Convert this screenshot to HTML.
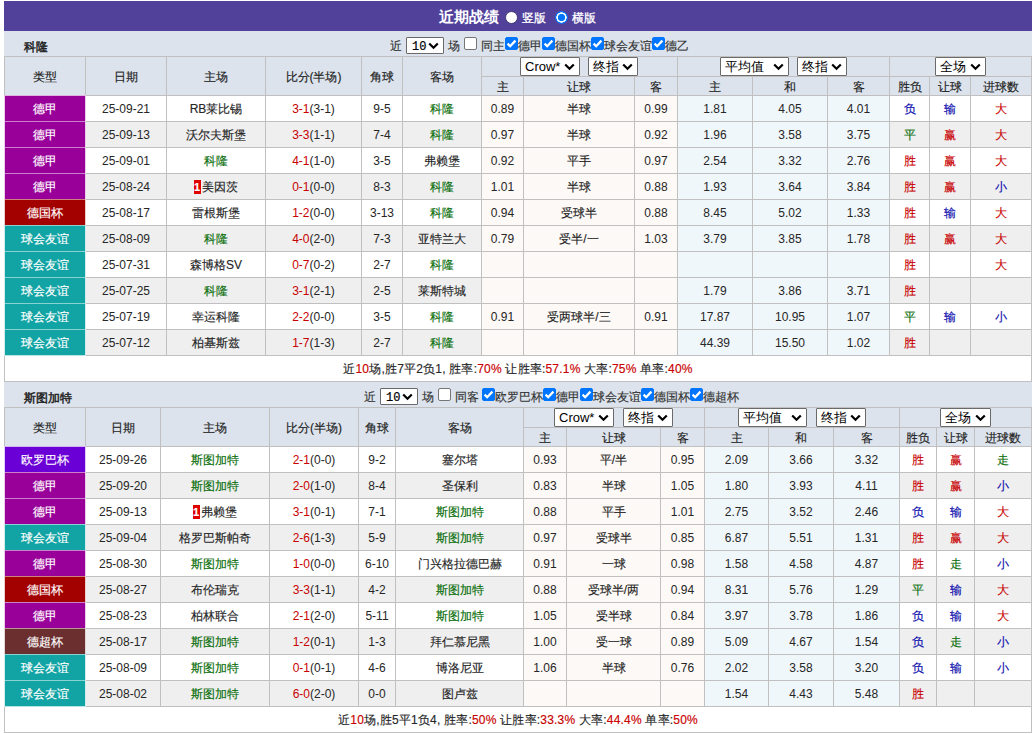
<!DOCTYPE html><html><head><meta charset="utf-8"><style>
*{margin:0;padding:0;box-sizing:border-box}
html,body{width:1034px;height:734px;overflow:hidden;background:#fff}
body{position:relative;font-family:"Liberation Sans",sans-serif;font-size:12px;color:#262626}
div{position:absolute}
.c{height:25px;line-height:25px;padding-top:1px;text-align:center;white-space:nowrap;overflow:hidden}
.hd{color:#222}
.lg{color:#fff}
.rc{display:inline-block;width:7px;height:14px;background:#e00000;color:#fff;font-size:11px;line-height:14px;vertical-align:top;margin-top:5px;margin-left:-1px;margin-right:1px;text-align:center;font-weight:bold}
.tname{font-weight:normal;-webkit-text-stroke:0.45px;font-size:12px;line-height:25px;height:25px;color:#222;padding-top:4px}
.sel{background:#fff;border:1px solid #6a6a6a;border-radius:1px}
.sel .st{position:absolute;left:4px;top:0;line-height:17px;font-size:13px;color:#000}
.sm10 .st{line-height:19px;font-family:'Liberation Mono',monospace;font-size:12px;left:5px;-webkit-text-stroke:0.2px}
.sel .chev{position:absolute;right:4px;top:5px}
.sm10 .chev{top:4px}
.cb{width:13px;height:13px;border:1px solid #767676;border-radius:2px;background:#fff}
.cb.on{background:#0075ff;border-color:#0075ff}
.cb.on svg{position:absolute;left:-1px;top:-1px}
.r{color:#c80000}
.sm{letter-spacing:0.2px}
.cj,.hd,.ft,.sm{-webkit-text-stroke:0.15px}
.ft{line-height:25px;height:25px;white-space:nowrap;color:#333;padding-top:3px}
.rad{width:13px;height:13px;border-radius:50%;background:#fff;border:1px solid #3b3470}
.rad.on{border:none;background:radial-gradient(circle closest-side, #0075ff 0 3.4px, #fff 3.9px 4.9px, #0075ff 5.4px 6px, #3d5fd0 6.5px)}
</style></head><body>
<div style="left:4px;top:1px;width:1028px;height:30px;background:#52419b"></div>
<div style="left:439px;top:2px;height:30px;line-height:30px;font-size:15px;font-weight:bold;color:#fff">近期战绩</div>
<div class="rad" style="left:505px;top:11px"></div>
<div style="left:522px;top:3px;height:30px;line-height:30px;font-size:12px;color:#fff;-webkit-text-stroke:0.3px">竖版</div>
<div class="rad on" style="left:555px;top:11px"></div>
<div style="left:572px;top:3px;height:30px;line-height:30px;font-size:12px;color:#fff;-webkit-text-stroke:0.3px">横版</div>

<div style="left:4px;top:31px;width:1028px;height:25px;background:#dce3ec"></div>
<div class="tname" style="left:24px;top:31px">科隆</div>
<div style="left:4px;top:56px;width:1027px;height:39px;background:#dce3ec"></div>
<div style="left:4px;top:95px;width:1027px;height:26px;background:#ffffff"></div>
<div style="left:481px;top:95px;width:196px;height:26px;background:#fdf9f6"></div>
<div style="left:677px;top:95px;width:212px;height:26px;background:#f0f7fb"></div>
<div style="left:4px;top:121px;width:1027px;height:26px;background:#efefef"></div>
<div style="left:481px;top:121px;width:196px;height:26px;background:#fdf9f6"></div>
<div style="left:677px;top:121px;width:212px;height:26px;background:#f0f7fb"></div>
<div style="left:4px;top:147px;width:1027px;height:26px;background:#ffffff"></div>
<div style="left:481px;top:147px;width:196px;height:26px;background:#fdf9f6"></div>
<div style="left:677px;top:147px;width:212px;height:26px;background:#f0f7fb"></div>
<div style="left:4px;top:173px;width:1027px;height:26px;background:#efefef"></div>
<div style="left:481px;top:173px;width:196px;height:26px;background:#fdf9f6"></div>
<div style="left:677px;top:173px;width:212px;height:26px;background:#f0f7fb"></div>
<div style="left:4px;top:199px;width:1027px;height:26px;background:#ffffff"></div>
<div style="left:481px;top:199px;width:196px;height:26px;background:#fdf9f6"></div>
<div style="left:677px;top:199px;width:212px;height:26px;background:#f0f7fb"></div>
<div style="left:4px;top:225px;width:1027px;height:26px;background:#efefef"></div>
<div style="left:481px;top:225px;width:196px;height:26px;background:#fdf9f6"></div>
<div style="left:677px;top:225px;width:212px;height:26px;background:#f0f7fb"></div>
<div style="left:4px;top:251px;width:1027px;height:26px;background:#ffffff"></div>
<div style="left:481px;top:251px;width:196px;height:26px;background:#fdf9f6"></div>
<div style="left:677px;top:251px;width:212px;height:26px;background:#f0f7fb"></div>
<div style="left:4px;top:277px;width:1027px;height:26px;background:#efefef"></div>
<div style="left:481px;top:277px;width:196px;height:26px;background:#fdf9f6"></div>
<div style="left:677px;top:277px;width:212px;height:26px;background:#f0f7fb"></div>
<div style="left:4px;top:303px;width:1027px;height:26px;background:#ffffff"></div>
<div style="left:481px;top:303px;width:196px;height:26px;background:#fdf9f6"></div>
<div style="left:677px;top:303px;width:212px;height:26px;background:#f0f7fb"></div>
<div style="left:4px;top:329px;width:1027px;height:26px;background:#efefef"></div>
<div style="left:481px;top:329px;width:196px;height:26px;background:#fdf9f6"></div>
<div style="left:677px;top:329px;width:212px;height:26px;background:#f0f7fb"></div>
<div style="left:4px;top:355px;width:1027px;height:26px;background:#fff"></div>
<div style="left:4px;top:56px;width:1028px;height:1px;background:#c0c0c0"></div>
<div style="left:481px;top:76px;width:551px;height:1px;background:#c0c0c0"></div>
<div style="left:4px;top:95px;width:1028px;height:1px;background:#c0c0c0"></div>
<div style="left:4px;top:121px;width:1028px;height:1px;background:#c0c0c0"></div>
<div style="left:4px;top:147px;width:1028px;height:1px;background:#c0c0c0"></div>
<div style="left:4px;top:173px;width:1028px;height:1px;background:#c0c0c0"></div>
<div style="left:4px;top:199px;width:1028px;height:1px;background:#c0c0c0"></div>
<div style="left:4px;top:225px;width:1028px;height:1px;background:#c0c0c0"></div>
<div style="left:4px;top:251px;width:1028px;height:1px;background:#c0c0c0"></div>
<div style="left:4px;top:277px;width:1028px;height:1px;background:#c0c0c0"></div>
<div style="left:4px;top:303px;width:1028px;height:1px;background:#c0c0c0"></div>
<div style="left:4px;top:329px;width:1028px;height:1px;background:#c0c0c0"></div>
<div style="left:4px;top:355px;width:1028px;height:1px;background:#c0c0c0"></div>
<div style="left:4px;top:381px;width:1028px;height:1px;background:#c0c0c0"></div>
<div style="left:4px;top:56px;width:1px;height:326px;background:#c0c0c0"></div>
<div style="left:85px;top:56px;width:1px;height:300px;background:#c0c0c0"></div>
<div style="left:166px;top:56px;width:1px;height:300px;background:#c0c0c0"></div>
<div style="left:265px;top:56px;width:1px;height:300px;background:#c0c0c0"></div>
<div style="left:361px;top:56px;width:1px;height:300px;background:#c0c0c0"></div>
<div style="left:402px;top:56px;width:1px;height:300px;background:#c0c0c0"></div>
<div style="left:481px;top:56px;width:1px;height:300px;background:#c0c0c0"></div>
<div style="left:523px;top:76px;width:1px;height:280px;background:#c0c0c0"></div>
<div style="left:634px;top:76px;width:1px;height:280px;background:#c0c0c0"></div>
<div style="left:677px;top:56px;width:1px;height:300px;background:#c0c0c0"></div>
<div style="left:752px;top:76px;width:1px;height:280px;background:#c0c0c0"></div>
<div style="left:827px;top:76px;width:1px;height:280px;background:#c0c0c0"></div>
<div style="left:889px;top:56px;width:1px;height:300px;background:#c0c0c0"></div>
<div style="left:929px;top:76px;width:1px;height:280px;background:#c0c0c0"></div>
<div style="left:970px;top:76px;width:1px;height:280px;background:#c0c0c0"></div>
<div style="left:1031px;top:56px;width:1px;height:326px;background:#c0c0c0"></div>
<div style="left:4px;top:95px;width:82px;height:27px;background:#990099"></div>
<div style="left:4px;top:121px;width:82px;height:27px;background:#990099"></div>
<div style="left:4px;top:147px;width:82px;height:27px;background:#990099"></div>
<div style="left:4px;top:173px;width:82px;height:27px;background:#990099"></div>
<div style="left:4px;top:199px;width:82px;height:27px;background:#a30000"></div>
<div style="left:4px;top:225px;width:82px;height:27px;background:#12a4a4"></div>
<div style="left:4px;top:251px;width:82px;height:27px;background:#12a4a4"></div>
<div style="left:4px;top:277px;width:82px;height:27px;background:#12a4a4"></div>
<div style="left:4px;top:303px;width:82px;height:27px;background:#12a4a4"></div>
<div style="left:4px;top:329px;width:82px;height:27px;background:#12a4a4"></div>
<div style="left:5px;top:95px;width:80px;height:1px;background:rgba(255,255,255,0.7)"></div>
<div style="left:5px;top:121px;width:80px;height:1px;background:rgba(255,255,255,0.5)"></div>
<div style="left:5px;top:147px;width:80px;height:1px;background:rgba(255,255,255,0.5)"></div>
<div style="left:5px;top:173px;width:80px;height:1px;background:rgba(255,255,255,0.5)"></div>
<div style="left:5px;top:199px;width:80px;height:1px;background:rgba(255,255,255,0.5)"></div>
<div style="left:5px;top:225px;width:80px;height:1px;background:rgba(255,255,255,0.5)"></div>
<div style="left:5px;top:251px;width:80px;height:1px;background:rgba(255,255,255,0.5)"></div>
<div style="left:5px;top:277px;width:80px;height:1px;background:rgba(255,255,255,0.5)"></div>
<div style="left:5px;top:303px;width:80px;height:1px;background:rgba(255,255,255,0.5)"></div>
<div style="left:5px;top:329px;width:80px;height:1px;background:rgba(255,255,255,0.5)"></div>
<div style="left:5px;top:355px;width:80px;height:1px;background:rgba(255,255,255,0.7)"></div>
<div style="left:4px;top:95px;width:1px;height:261px;background:rgba(255,255,255,0.8)"></div>
<div style="left:85px;top:95px;width:1px;height:261px;background:rgba(255,255,255,0.8)"></div>
<div class="c hd" style="left:5px;top:57px;width:80px;height:38px;line-height:38px">类型</div>
<div class="c hd" style="left:86px;top:57px;width:80px;height:38px;line-height:38px">日期</div>
<div class="c hd" style="left:167px;top:57px;width:98px;height:38px;line-height:38px">主场</div>
<div class="c hd" style="left:266px;top:57px;width:95px;height:38px;line-height:38px">比分(半场)</div>
<div class="c hd" style="left:362px;top:57px;width:40px;height:38px;line-height:38px">角球</div>
<div class="c hd" style="left:403px;top:57px;width:78px;height:38px;line-height:38px">客场</div>
<div class="c hd" style="left:482px;top:77px;width:41px;height:18px;line-height:18px">主</div>
<div class="c hd" style="left:524px;top:77px;width:110px;height:18px;line-height:18px">让球</div>
<div class="c hd" style="left:635px;top:77px;width:42px;height:18px;line-height:18px">客</div>
<div class="c hd" style="left:678px;top:77px;width:74px;height:18px;line-height:18px">主</div>
<div class="c hd" style="left:753px;top:77px;width:74px;height:18px;line-height:18px">和</div>
<div class="c hd" style="left:828px;top:77px;width:61px;height:18px;line-height:18px">客</div>
<div class="c hd" style="left:890px;top:77px;width:39px;height:18px;line-height:18px">胜负</div>
<div class="c hd" style="left:930px;top:77px;width:40px;height:18px;line-height:18px">让球</div>
<div class="c hd" style="left:971px;top:77px;width:60px;height:18px;line-height:18px">进球数</div>
<div class="sel" style="left:520px;top:57px;width:60px;height:19px"><span class="st">Crow*</span><svg class="chev" width="11" height="8" viewBox="0 0 11 8"><path d="M1.2 1.5 L5.5 5.8 L9.8 1.5" fill="none" stroke="#000" stroke-width="2.2"/></svg></div>
<div class="sel" style="left:588px;top:57px;width:50px;height:19px"><span class="st">终指</span><svg class="chev" width="11" height="8" viewBox="0 0 11 8"><path d="M1.2 1.5 L5.5 5.8 L9.8 1.5" fill="none" stroke="#000" stroke-width="2.2"/></svg></div>
<div class="sel" style="left:720px;top:57px;width:69px;height:19px"><span class="st">平均值</span><svg class="chev" width="11" height="8" viewBox="0 0 11 8"><path d="M1.2 1.5 L5.5 5.8 L9.8 1.5" fill="none" stroke="#000" stroke-width="2.2"/></svg></div>
<div class="sel" style="left:797px;top:57px;width:50px;height:19px"><span class="st">终指</span><svg class="chev" width="11" height="8" viewBox="0 0 11 8"><path d="M1.2 1.5 L5.5 5.8 L9.8 1.5" fill="none" stroke="#000" stroke-width="2.2"/></svg></div>
<div class="sel" style="left:935px;top:57px;width:51px;height:19px"><span class="st">全场</span><svg class="chev" width="11" height="8" viewBox="0 0 11 8"><path d="M1.2 1.5 L5.5 5.8 L9.8 1.5" fill="none" stroke="#000" stroke-width="2.2"/></svg></div>
<div class="c lg cj" style="left:5px;top:96px;width:80px;">德甲</div>
<div class="c" style="left:86px;top:96px;width:80px;">25-09-21</div>
<div class="c cj" style="left:167px;top:96px;width:98px;">RB莱比锡</div>
<div class="c" style="left:266px;top:96px;width:95px;"><span style="color:#c80000">3-1</span>(3-1)</div>
<div class="c" style="left:362px;top:96px;width:40px;">9-5</div>
<div class="c cj" style="left:403px;top:96px;width:78px;"><span style="color:#0a6e0a">科隆</span></div>
<div class="c" style="left:482px;top:96px;width:41px;">0.89</div>
<div class="c cj" style="left:524px;top:96px;width:110px;">半球</div>
<div class="c" style="left:635px;top:96px;width:42px;">0.99</div>
<div class="c" style="left:678px;top:96px;width:74px;">1.81</div>
<div class="c" style="left:753px;top:96px;width:74px;">4.05</div>
<div class="c" style="left:828px;top:96px;width:61px;">4.01</div>
<div class="c cj" style="left:890px;top:96px;width:39px;"><span style="color:#0a0aad">负</span></div>
<div class="c cj" style="left:930px;top:96px;width:40px;"><span style="color:#0a0aad">输</span></div>
<div class="c cj" style="left:971px;top:96px;width:60px;"><span style="color:#c80000">大</span></div>
<div class="c lg cj" style="left:5px;top:122px;width:80px;">德甲</div>
<div class="c" style="left:86px;top:122px;width:80px;">25-09-13</div>
<div class="c cj" style="left:167px;top:122px;width:98px;">沃尔夫斯堡</div>
<div class="c" style="left:266px;top:122px;width:95px;"><span style="color:#c80000">3-3</span>(1-1)</div>
<div class="c" style="left:362px;top:122px;width:40px;">7-4</div>
<div class="c cj" style="left:403px;top:122px;width:78px;"><span style="color:#0a6e0a">科隆</span></div>
<div class="c" style="left:482px;top:122px;width:41px;">0.97</div>
<div class="c cj" style="left:524px;top:122px;width:110px;">半球</div>
<div class="c" style="left:635px;top:122px;width:42px;">0.92</div>
<div class="c" style="left:678px;top:122px;width:74px;">1.96</div>
<div class="c" style="left:753px;top:122px;width:74px;">3.58</div>
<div class="c" style="left:828px;top:122px;width:61px;">3.75</div>
<div class="c cj" style="left:890px;top:122px;width:39px;"><span style="color:#0a6e0a">平</span></div>
<div class="c cj" style="left:930px;top:122px;width:40px;"><span style="color:#c80000">赢</span></div>
<div class="c cj" style="left:971px;top:122px;width:60px;"><span style="color:#c80000">大</span></div>
<div class="c lg cj" style="left:5px;top:148px;width:80px;">德甲</div>
<div class="c" style="left:86px;top:148px;width:80px;">25-09-01</div>
<div class="c cj" style="left:167px;top:148px;width:98px;"><span style="color:#0a6e0a">科隆</span></div>
<div class="c" style="left:266px;top:148px;width:95px;"><span style="color:#c80000">4-1</span>(1-0)</div>
<div class="c" style="left:362px;top:148px;width:40px;">3-5</div>
<div class="c cj" style="left:403px;top:148px;width:78px;">弗赖堡</div>
<div class="c" style="left:482px;top:148px;width:41px;">0.92</div>
<div class="c cj" style="left:524px;top:148px;width:110px;">平手</div>
<div class="c" style="left:635px;top:148px;width:42px;">0.97</div>
<div class="c" style="left:678px;top:148px;width:74px;">2.54</div>
<div class="c" style="left:753px;top:148px;width:74px;">3.32</div>
<div class="c" style="left:828px;top:148px;width:61px;">2.76</div>
<div class="c cj" style="left:890px;top:148px;width:39px;"><span style="color:#c80000">胜</span></div>
<div class="c cj" style="left:930px;top:148px;width:40px;"><span style="color:#c80000">赢</span></div>
<div class="c cj" style="left:971px;top:148px;width:60px;"><span style="color:#c80000">大</span></div>
<div class="c lg cj" style="left:5px;top:174px;width:80px;">德甲</div>
<div class="c" style="left:86px;top:174px;width:80px;">25-08-24</div>
<div class="c cj" style="left:167px;top:174px;width:98px;"><span class="rc">1</span>美因茨</div>
<div class="c" style="left:266px;top:174px;width:95px;"><span style="color:#c80000">0-1</span>(0-0)</div>
<div class="c" style="left:362px;top:174px;width:40px;">8-3</div>
<div class="c cj" style="left:403px;top:174px;width:78px;"><span style="color:#0a6e0a">科隆</span></div>
<div class="c" style="left:482px;top:174px;width:41px;">1.01</div>
<div class="c cj" style="left:524px;top:174px;width:110px;">半球</div>
<div class="c" style="left:635px;top:174px;width:42px;">0.88</div>
<div class="c" style="left:678px;top:174px;width:74px;">1.93</div>
<div class="c" style="left:753px;top:174px;width:74px;">3.64</div>
<div class="c" style="left:828px;top:174px;width:61px;">3.84</div>
<div class="c cj" style="left:890px;top:174px;width:39px;"><span style="color:#c80000">胜</span></div>
<div class="c cj" style="left:930px;top:174px;width:40px;"><span style="color:#c80000">赢</span></div>
<div class="c cj" style="left:971px;top:174px;width:60px;"><span style="color:#0a0aad">小</span></div>
<div class="c lg cj" style="left:5px;top:200px;width:80px;">德国杯</div>
<div class="c" style="left:86px;top:200px;width:80px;">25-08-17</div>
<div class="c cj" style="left:167px;top:200px;width:98px;">雷根斯堡</div>
<div class="c" style="left:266px;top:200px;width:95px;"><span style="color:#c80000">1-2</span>(0-0)</div>
<div class="c" style="left:362px;top:200px;width:40px;">3-13</div>
<div class="c cj" style="left:403px;top:200px;width:78px;"><span style="color:#0a6e0a">科隆</span></div>
<div class="c" style="left:482px;top:200px;width:41px;">0.94</div>
<div class="c cj" style="left:524px;top:200px;width:110px;">受球半</div>
<div class="c" style="left:635px;top:200px;width:42px;">0.88</div>
<div class="c" style="left:678px;top:200px;width:74px;">8.45</div>
<div class="c" style="left:753px;top:200px;width:74px;">5.02</div>
<div class="c" style="left:828px;top:200px;width:61px;">1.33</div>
<div class="c cj" style="left:890px;top:200px;width:39px;"><span style="color:#c80000">胜</span></div>
<div class="c cj" style="left:930px;top:200px;width:40px;"><span style="color:#0a0aad">输</span></div>
<div class="c cj" style="left:971px;top:200px;width:60px;"><span style="color:#c80000">大</span></div>
<div class="c lg cj" style="left:5px;top:226px;width:80px;">球会友谊</div>
<div class="c" style="left:86px;top:226px;width:80px;">25-08-09</div>
<div class="c cj" style="left:167px;top:226px;width:98px;"><span style="color:#0a6e0a">科隆</span></div>
<div class="c" style="left:266px;top:226px;width:95px;"><span style="color:#c80000">4-0</span>(2-0)</div>
<div class="c" style="left:362px;top:226px;width:40px;">7-3</div>
<div class="c cj" style="left:403px;top:226px;width:78px;">亚特兰大</div>
<div class="c" style="left:482px;top:226px;width:41px;">0.79</div>
<div class="c cj" style="left:524px;top:226px;width:110px;">受半/一</div>
<div class="c" style="left:635px;top:226px;width:42px;">1.03</div>
<div class="c" style="left:678px;top:226px;width:74px;">3.79</div>
<div class="c" style="left:753px;top:226px;width:74px;">3.85</div>
<div class="c" style="left:828px;top:226px;width:61px;">1.78</div>
<div class="c cj" style="left:890px;top:226px;width:39px;"><span style="color:#c80000">胜</span></div>
<div class="c cj" style="left:930px;top:226px;width:40px;"><span style="color:#c80000">赢</span></div>
<div class="c cj" style="left:971px;top:226px;width:60px;"><span style="color:#c80000">大</span></div>
<div class="c lg cj" style="left:5px;top:252px;width:80px;">球会友谊</div>
<div class="c" style="left:86px;top:252px;width:80px;">25-07-31</div>
<div class="c cj" style="left:167px;top:252px;width:98px;">森博格SV</div>
<div class="c" style="left:266px;top:252px;width:95px;"><span style="color:#c80000">0-7</span>(0-2)</div>
<div class="c" style="left:362px;top:252px;width:40px;">2-7</div>
<div class="c cj" style="left:403px;top:252px;width:78px;"><span style="color:#0a6e0a">科隆</span></div>
<div class="c" style="left:482px;top:252px;width:41px;"></div>
<div class="c" style="left:524px;top:252px;width:110px;"></div>
<div class="c" style="left:635px;top:252px;width:42px;"></div>
<div class="c" style="left:678px;top:252px;width:74px;"></div>
<div class="c" style="left:753px;top:252px;width:74px;"></div>
<div class="c" style="left:828px;top:252px;width:61px;"></div>
<div class="c cj" style="left:890px;top:252px;width:39px;"><span style="color:#c80000">胜</span></div>
<div class="c" style="left:930px;top:252px;width:40px;"></div>
<div class="c cj" style="left:971px;top:252px;width:60px;"><span style="color:#c80000">大</span></div>
<div class="c lg cj" style="left:5px;top:278px;width:80px;">球会友谊</div>
<div class="c" style="left:86px;top:278px;width:80px;">25-07-25</div>
<div class="c cj" style="left:167px;top:278px;width:98px;"><span style="color:#0a6e0a">科隆</span></div>
<div class="c" style="left:266px;top:278px;width:95px;"><span style="color:#c80000">3-1</span>(2-1)</div>
<div class="c" style="left:362px;top:278px;width:40px;">2-5</div>
<div class="c cj" style="left:403px;top:278px;width:78px;">莱斯特城</div>
<div class="c" style="left:482px;top:278px;width:41px;"></div>
<div class="c" style="left:524px;top:278px;width:110px;"></div>
<div class="c" style="left:635px;top:278px;width:42px;"></div>
<div class="c" style="left:678px;top:278px;width:74px;">1.79</div>
<div class="c" style="left:753px;top:278px;width:74px;">3.86</div>
<div class="c" style="left:828px;top:278px;width:61px;">3.71</div>
<div class="c cj" style="left:890px;top:278px;width:39px;"><span style="color:#c80000">胜</span></div>
<div class="c" style="left:930px;top:278px;width:40px;"></div>
<div class="c" style="left:971px;top:278px;width:60px;"></div>
<div class="c lg cj" style="left:5px;top:304px;width:80px;">球会友谊</div>
<div class="c" style="left:86px;top:304px;width:80px;">25-07-19</div>
<div class="c cj" style="left:167px;top:304px;width:98px;">幸运科隆</div>
<div class="c" style="left:266px;top:304px;width:95px;"><span style="color:#c80000">2-2</span>(0-0)</div>
<div class="c" style="left:362px;top:304px;width:40px;">3-5</div>
<div class="c cj" style="left:403px;top:304px;width:78px;"><span style="color:#0a6e0a">科隆</span></div>
<div class="c" style="left:482px;top:304px;width:41px;">0.91</div>
<div class="c cj" style="left:524px;top:304px;width:110px;">受两球半/三</div>
<div class="c" style="left:635px;top:304px;width:42px;">0.91</div>
<div class="c" style="left:678px;top:304px;width:74px;">17.87</div>
<div class="c" style="left:753px;top:304px;width:74px;">10.95</div>
<div class="c" style="left:828px;top:304px;width:61px;">1.07</div>
<div class="c cj" style="left:890px;top:304px;width:39px;"><span style="color:#0a6e0a">平</span></div>
<div class="c cj" style="left:930px;top:304px;width:40px;"><span style="color:#0a0aad">输</span></div>
<div class="c cj" style="left:971px;top:304px;width:60px;"><span style="color:#0a0aad">小</span></div>
<div class="c lg cj" style="left:5px;top:330px;width:80px;">球会友谊</div>
<div class="c" style="left:86px;top:330px;width:80px;">25-07-12</div>
<div class="c cj" style="left:167px;top:330px;width:98px;">柏基斯兹</div>
<div class="c" style="left:266px;top:330px;width:95px;"><span style="color:#c80000">1-7</span>(1-3)</div>
<div class="c" style="left:362px;top:330px;width:40px;">2-7</div>
<div class="c cj" style="left:403px;top:330px;width:78px;"><span style="color:#0a6e0a">科隆</span></div>
<div class="c" style="left:482px;top:330px;width:41px;"></div>
<div class="c" style="left:524px;top:330px;width:110px;"></div>
<div class="c" style="left:635px;top:330px;width:42px;"></div>
<div class="c" style="left:678px;top:330px;width:74px;">44.39</div>
<div class="c" style="left:753px;top:330px;width:74px;">15.50</div>
<div class="c" style="left:828px;top:330px;width:61px;">1.02</div>
<div class="c cj" style="left:890px;top:330px;width:39px;"><span style="color:#c80000">胜</span></div>
<div class="c" style="left:930px;top:330px;width:40px;"></div>
<div class="c" style="left:971px;top:330px;width:60px;"></div>
<div class="c sm" style="left:5px;top:356px;width:1026px">近<span class="r">10</span>场,胜7平2负1, 胜率:<span class="r">70%</span> 让胜率:<span class="r">57.1%</span> 大率:<span class="r">75%</span> 单率:<span class="r">40%</span></div>
<div class="ft" style="left:390px;top:31px">近</div>
<div class="sel sm10" style="left:406px;top:37px;width:38px;height:17px"><span class="st">10</span><svg class="chev" width="11" height="8" viewBox="0 0 11 8"><path d="M1.2 1.5 L5.5 5.8 L9.8 1.5" fill="none" stroke="#000" stroke-width="2.2"/></svg></div>
<div class="ft" style="left:448px;top:31px">场</div>
<div class="cb" style="left:464px;top:37px"></div>
<div class="ft" style="left:481px;top:31px">同主</div>
<div class="cb on" style="left:505px;top:37px"><svg width="13" height="13" viewBox="0 0 13 13"><path d="M2.6 6.6 L5.2 9.2 L10.4 3.6" fill="none" stroke="#fff" stroke-width="2.3"/></svg></div>
<div class="ft" style="left:518px;top:31px">德甲</div>
<div class="cb on" style="left:542px;top:37px"><svg width="13" height="13" viewBox="0 0 13 13"><path d="M2.6 6.6 L5.2 9.2 L10.4 3.6" fill="none" stroke="#fff" stroke-width="2.3"/></svg></div>
<div class="ft" style="left:555px;top:31px">德国杯</div>
<div class="cb on" style="left:591px;top:37px"><svg width="13" height="13" viewBox="0 0 13 13"><path d="M2.6 6.6 L5.2 9.2 L10.4 3.6" fill="none" stroke="#fff" stroke-width="2.3"/></svg></div>
<div class="ft" style="left:604px;top:31px">球会友谊</div>
<div class="cb on" style="left:652px;top:37px"><svg width="13" height="13" viewBox="0 0 13 13"><path d="M2.6 6.6 L5.2 9.2 L10.4 3.6" fill="none" stroke="#fff" stroke-width="2.3"/></svg></div>
<div class="ft" style="left:665px;top:31px">德乙</div>
<div style="left:4px;top:382px;width:1028px;height:25px;background:#dce3ec"></div>
<div class="tname" style="left:24px;top:382px">斯图加特</div>
<div style="left:4px;top:407px;width:1027px;height:39px;background:#dce3ec"></div>
<div style="left:4px;top:446px;width:1027px;height:26px;background:#ffffff"></div>
<div style="left:523px;top:446px;width:181px;height:26px;background:#fdf9f6"></div>
<div style="left:704px;top:446px;width:195px;height:26px;background:#f0f7fb"></div>
<div style="left:4px;top:472px;width:1027px;height:26px;background:#efefef"></div>
<div style="left:523px;top:472px;width:181px;height:26px;background:#fdf9f6"></div>
<div style="left:704px;top:472px;width:195px;height:26px;background:#f0f7fb"></div>
<div style="left:4px;top:498px;width:1027px;height:26px;background:#ffffff"></div>
<div style="left:523px;top:498px;width:181px;height:26px;background:#fdf9f6"></div>
<div style="left:704px;top:498px;width:195px;height:26px;background:#f0f7fb"></div>
<div style="left:4px;top:524px;width:1027px;height:26px;background:#efefef"></div>
<div style="left:523px;top:524px;width:181px;height:26px;background:#fdf9f6"></div>
<div style="left:704px;top:524px;width:195px;height:26px;background:#f0f7fb"></div>
<div style="left:4px;top:550px;width:1027px;height:26px;background:#ffffff"></div>
<div style="left:523px;top:550px;width:181px;height:26px;background:#fdf9f6"></div>
<div style="left:704px;top:550px;width:195px;height:26px;background:#f0f7fb"></div>
<div style="left:4px;top:576px;width:1027px;height:26px;background:#efefef"></div>
<div style="left:523px;top:576px;width:181px;height:26px;background:#fdf9f6"></div>
<div style="left:704px;top:576px;width:195px;height:26px;background:#f0f7fb"></div>
<div style="left:4px;top:602px;width:1027px;height:26px;background:#ffffff"></div>
<div style="left:523px;top:602px;width:181px;height:26px;background:#fdf9f6"></div>
<div style="left:704px;top:602px;width:195px;height:26px;background:#f0f7fb"></div>
<div style="left:4px;top:628px;width:1027px;height:26px;background:#efefef"></div>
<div style="left:523px;top:628px;width:181px;height:26px;background:#fdf9f6"></div>
<div style="left:704px;top:628px;width:195px;height:26px;background:#f0f7fb"></div>
<div style="left:4px;top:654px;width:1027px;height:26px;background:#ffffff"></div>
<div style="left:523px;top:654px;width:181px;height:26px;background:#fdf9f6"></div>
<div style="left:704px;top:654px;width:195px;height:26px;background:#f0f7fb"></div>
<div style="left:4px;top:680px;width:1027px;height:26px;background:#efefef"></div>
<div style="left:523px;top:680px;width:181px;height:26px;background:#fdf9f6"></div>
<div style="left:704px;top:680px;width:195px;height:26px;background:#f0f7fb"></div>
<div style="left:4px;top:706px;width:1027px;height:26px;background:#fff"></div>
<div style="left:4px;top:407px;width:1028px;height:1px;background:#c0c0c0"></div>
<div style="left:523px;top:427px;width:509px;height:1px;background:#c0c0c0"></div>
<div style="left:4px;top:446px;width:1028px;height:1px;background:#c0c0c0"></div>
<div style="left:4px;top:472px;width:1028px;height:1px;background:#c0c0c0"></div>
<div style="left:4px;top:498px;width:1028px;height:1px;background:#c0c0c0"></div>
<div style="left:4px;top:524px;width:1028px;height:1px;background:#c0c0c0"></div>
<div style="left:4px;top:550px;width:1028px;height:1px;background:#c0c0c0"></div>
<div style="left:4px;top:576px;width:1028px;height:1px;background:#c0c0c0"></div>
<div style="left:4px;top:602px;width:1028px;height:1px;background:#c0c0c0"></div>
<div style="left:4px;top:628px;width:1028px;height:1px;background:#c0c0c0"></div>
<div style="left:4px;top:654px;width:1028px;height:1px;background:#c0c0c0"></div>
<div style="left:4px;top:680px;width:1028px;height:1px;background:#c0c0c0"></div>
<div style="left:4px;top:706px;width:1028px;height:1px;background:#c0c0c0"></div>
<div style="left:4px;top:732px;width:1028px;height:1px;background:#c0c0c0"></div>
<div style="left:4px;top:407px;width:1px;height:326px;background:#c0c0c0"></div>
<div style="left:85px;top:407px;width:1px;height:300px;background:#c0c0c0"></div>
<div style="left:160px;top:407px;width:1px;height:300px;background:#c0c0c0"></div>
<div style="left:269px;top:407px;width:1px;height:300px;background:#c0c0c0"></div>
<div style="left:358px;top:407px;width:1px;height:300px;background:#c0c0c0"></div>
<div style="left:395px;top:407px;width:1px;height:300px;background:#c0c0c0"></div>
<div style="left:523px;top:407px;width:1px;height:300px;background:#c0c0c0"></div>
<div style="left:566px;top:427px;width:1px;height:280px;background:#c0c0c0"></div>
<div style="left:660px;top:427px;width:1px;height:280px;background:#c0c0c0"></div>
<div style="left:704px;top:407px;width:1px;height:300px;background:#c0c0c0"></div>
<div style="left:768px;top:427px;width:1px;height:280px;background:#c0c0c0"></div>
<div style="left:833px;top:427px;width:1px;height:280px;background:#c0c0c0"></div>
<div style="left:899px;top:407px;width:1px;height:300px;background:#c0c0c0"></div>
<div style="left:936px;top:427px;width:1px;height:280px;background:#c0c0c0"></div>
<div style="left:974px;top:427px;width:1px;height:280px;background:#c0c0c0"></div>
<div style="left:1031px;top:407px;width:1px;height:326px;background:#c0c0c0"></div>
<div style="left:4px;top:446px;width:82px;height:27px;background:#6a00d6"></div>
<div style="left:4px;top:472px;width:82px;height:27px;background:#990099"></div>
<div style="left:4px;top:498px;width:82px;height:27px;background:#990099"></div>
<div style="left:4px;top:524px;width:82px;height:27px;background:#12a4a4"></div>
<div style="left:4px;top:550px;width:82px;height:27px;background:#990099"></div>
<div style="left:4px;top:576px;width:82px;height:27px;background:#a30000"></div>
<div style="left:4px;top:602px;width:82px;height:27px;background:#990099"></div>
<div style="left:4px;top:628px;width:82px;height:27px;background:#6b2f2f"></div>
<div style="left:4px;top:654px;width:82px;height:27px;background:#12a4a4"></div>
<div style="left:4px;top:680px;width:82px;height:27px;background:#12a4a4"></div>
<div style="left:5px;top:446px;width:80px;height:1px;background:rgba(255,255,255,0.7)"></div>
<div style="left:5px;top:472px;width:80px;height:1px;background:rgba(255,255,255,0.5)"></div>
<div style="left:5px;top:498px;width:80px;height:1px;background:rgba(255,255,255,0.5)"></div>
<div style="left:5px;top:524px;width:80px;height:1px;background:rgba(255,255,255,0.5)"></div>
<div style="left:5px;top:550px;width:80px;height:1px;background:rgba(255,255,255,0.5)"></div>
<div style="left:5px;top:576px;width:80px;height:1px;background:rgba(255,255,255,0.5)"></div>
<div style="left:5px;top:602px;width:80px;height:1px;background:rgba(255,255,255,0.5)"></div>
<div style="left:5px;top:628px;width:80px;height:1px;background:rgba(255,255,255,0.5)"></div>
<div style="left:5px;top:654px;width:80px;height:1px;background:rgba(255,255,255,0.5)"></div>
<div style="left:5px;top:680px;width:80px;height:1px;background:rgba(255,255,255,0.5)"></div>
<div style="left:5px;top:706px;width:80px;height:1px;background:rgba(255,255,255,0.7)"></div>
<div style="left:4px;top:446px;width:1px;height:261px;background:rgba(255,255,255,0.8)"></div>
<div style="left:85px;top:446px;width:1px;height:261px;background:rgba(255,255,255,0.8)"></div>
<div class="c hd" style="left:5px;top:408px;width:80px;height:38px;line-height:38px">类型</div>
<div class="c hd" style="left:86px;top:408px;width:74px;height:38px;line-height:38px">日期</div>
<div class="c hd" style="left:161px;top:408px;width:108px;height:38px;line-height:38px">主场</div>
<div class="c hd" style="left:270px;top:408px;width:88px;height:38px;line-height:38px">比分(半场)</div>
<div class="c hd" style="left:359px;top:408px;width:36px;height:38px;line-height:38px">角球</div>
<div class="c hd" style="left:396px;top:408px;width:127px;height:38px;line-height:38px">客场</div>
<div class="c hd" style="left:524px;top:428px;width:42px;height:18px;line-height:18px">主</div>
<div class="c hd" style="left:567px;top:428px;width:93px;height:18px;line-height:18px">让球</div>
<div class="c hd" style="left:661px;top:428px;width:43px;height:18px;line-height:18px">客</div>
<div class="c hd" style="left:705px;top:428px;width:63px;height:18px;line-height:18px">主</div>
<div class="c hd" style="left:769px;top:428px;width:64px;height:18px;line-height:18px">和</div>
<div class="c hd" style="left:834px;top:428px;width:65px;height:18px;line-height:18px">客</div>
<div class="c hd" style="left:900px;top:428px;width:36px;height:18px;line-height:18px">胜负</div>
<div class="c hd" style="left:937px;top:428px;width:37px;height:18px;line-height:18px">让球</div>
<div class="c hd" style="left:975px;top:428px;width:56px;height:18px;line-height:18px">进球数</div>
<div class="sel" style="left:554px;top:408px;width:60px;height:19px"><span class="st">Crow*</span><svg class="chev" width="11" height="8" viewBox="0 0 11 8"><path d="M1.2 1.5 L5.5 5.8 L9.8 1.5" fill="none" stroke="#000" stroke-width="2.2"/></svg></div>
<div class="sel" style="left:623px;top:408px;width:50px;height:19px"><span class="st">终指</span><svg class="chev" width="11" height="8" viewBox="0 0 11 8"><path d="M1.2 1.5 L5.5 5.8 L9.8 1.5" fill="none" stroke="#000" stroke-width="2.2"/></svg></div>
<div class="sel" style="left:738px;top:408px;width:69px;height:19px"><span class="st">平均值</span><svg class="chev" width="11" height="8" viewBox="0 0 11 8"><path d="M1.2 1.5 L5.5 5.8 L9.8 1.5" fill="none" stroke="#000" stroke-width="2.2"/></svg></div>
<div class="sel" style="left:816px;top:408px;width:50px;height:19px"><span class="st">终指</span><svg class="chev" width="11" height="8" viewBox="0 0 11 8"><path d="M1.2 1.5 L5.5 5.8 L9.8 1.5" fill="none" stroke="#000" stroke-width="2.2"/></svg></div>
<div class="sel" style="left:940px;top:408px;width:51px;height:19px"><span class="st">全场</span><svg class="chev" width="11" height="8" viewBox="0 0 11 8"><path d="M1.2 1.5 L5.5 5.8 L9.8 1.5" fill="none" stroke="#000" stroke-width="2.2"/></svg></div>
<div class="c lg cj" style="left:5px;top:447px;width:80px;">欧罗巴杯</div>
<div class="c" style="left:86px;top:447px;width:74px;">25-09-26</div>
<div class="c cj" style="left:161px;top:447px;width:108px;"><span style="color:#0a6e0a">斯图加特</span></div>
<div class="c" style="left:270px;top:447px;width:88px;"><span style="color:#c80000">2-1</span>(0-0)</div>
<div class="c" style="left:359px;top:447px;width:36px;">9-2</div>
<div class="c cj" style="left:396px;top:447px;width:127px;">塞尔塔</div>
<div class="c" style="left:524px;top:447px;width:42px;">0.93</div>
<div class="c cj" style="left:567px;top:447px;width:93px;">平/半</div>
<div class="c" style="left:661px;top:447px;width:43px;">0.95</div>
<div class="c" style="left:705px;top:447px;width:63px;">2.09</div>
<div class="c" style="left:769px;top:447px;width:64px;">3.66</div>
<div class="c" style="left:834px;top:447px;width:65px;">3.32</div>
<div class="c cj" style="left:900px;top:447px;width:36px;"><span style="color:#c80000">胜</span></div>
<div class="c cj" style="left:937px;top:447px;width:37px;"><span style="color:#c80000">赢</span></div>
<div class="c cj" style="left:975px;top:447px;width:56px;"><span style="color:#0a6e0a">走</span></div>
<div class="c lg cj" style="left:5px;top:473px;width:80px;">德甲</div>
<div class="c" style="left:86px;top:473px;width:74px;">25-09-20</div>
<div class="c cj" style="left:161px;top:473px;width:108px;"><span style="color:#0a6e0a">斯图加特</span></div>
<div class="c" style="left:270px;top:473px;width:88px;"><span style="color:#c80000">2-0</span>(1-0)</div>
<div class="c" style="left:359px;top:473px;width:36px;">8-4</div>
<div class="c cj" style="left:396px;top:473px;width:127px;">圣保利</div>
<div class="c" style="left:524px;top:473px;width:42px;">0.83</div>
<div class="c cj" style="left:567px;top:473px;width:93px;">半球</div>
<div class="c" style="left:661px;top:473px;width:43px;">1.05</div>
<div class="c" style="left:705px;top:473px;width:63px;">1.80</div>
<div class="c" style="left:769px;top:473px;width:64px;">3.93</div>
<div class="c" style="left:834px;top:473px;width:65px;">4.11</div>
<div class="c cj" style="left:900px;top:473px;width:36px;"><span style="color:#c80000">胜</span></div>
<div class="c cj" style="left:937px;top:473px;width:37px;"><span style="color:#c80000">赢</span></div>
<div class="c cj" style="left:975px;top:473px;width:56px;"><span style="color:#0a0aad">小</span></div>
<div class="c lg cj" style="left:5px;top:499px;width:80px;">德甲</div>
<div class="c" style="left:86px;top:499px;width:74px;">25-09-13</div>
<div class="c cj" style="left:161px;top:499px;width:108px;"><span class="rc">1</span>弗赖堡</div>
<div class="c" style="left:270px;top:499px;width:88px;"><span style="color:#c80000">3-1</span>(0-1)</div>
<div class="c" style="left:359px;top:499px;width:36px;">7-1</div>
<div class="c cj" style="left:396px;top:499px;width:127px;"><span style="color:#0a6e0a">斯图加特</span></div>
<div class="c" style="left:524px;top:499px;width:42px;">0.88</div>
<div class="c cj" style="left:567px;top:499px;width:93px;">平手</div>
<div class="c" style="left:661px;top:499px;width:43px;">1.01</div>
<div class="c" style="left:705px;top:499px;width:63px;">2.75</div>
<div class="c" style="left:769px;top:499px;width:64px;">3.52</div>
<div class="c" style="left:834px;top:499px;width:65px;">2.46</div>
<div class="c cj" style="left:900px;top:499px;width:36px;"><span style="color:#0a0aad">负</span></div>
<div class="c cj" style="left:937px;top:499px;width:37px;"><span style="color:#0a0aad">输</span></div>
<div class="c cj" style="left:975px;top:499px;width:56px;"><span style="color:#c80000">大</span></div>
<div class="c lg cj" style="left:5px;top:525px;width:80px;">球会友谊</div>
<div class="c" style="left:86px;top:525px;width:74px;">25-09-04</div>
<div class="c cj" style="left:161px;top:525px;width:108px;">格罗巴斯帕奇</div>
<div class="c" style="left:270px;top:525px;width:88px;"><span style="color:#c80000">2-6</span>(1-3)</div>
<div class="c" style="left:359px;top:525px;width:36px;">5-9</div>
<div class="c cj" style="left:396px;top:525px;width:127px;"><span style="color:#0a6e0a">斯图加特</span></div>
<div class="c" style="left:524px;top:525px;width:42px;">0.97</div>
<div class="c cj" style="left:567px;top:525px;width:93px;">受球半</div>
<div class="c" style="left:661px;top:525px;width:43px;">0.85</div>
<div class="c" style="left:705px;top:525px;width:63px;">6.87</div>
<div class="c" style="left:769px;top:525px;width:64px;">5.51</div>
<div class="c" style="left:834px;top:525px;width:65px;">1.31</div>
<div class="c cj" style="left:900px;top:525px;width:36px;"><span style="color:#c80000">胜</span></div>
<div class="c cj" style="left:937px;top:525px;width:37px;"><span style="color:#c80000">赢</span></div>
<div class="c cj" style="left:975px;top:525px;width:56px;"><span style="color:#c80000">大</span></div>
<div class="c lg cj" style="left:5px;top:551px;width:80px;">德甲</div>
<div class="c" style="left:86px;top:551px;width:74px;">25-08-30</div>
<div class="c cj" style="left:161px;top:551px;width:108px;"><span style="color:#0a6e0a">斯图加特</span></div>
<div class="c" style="left:270px;top:551px;width:88px;"><span style="color:#c80000">1-0</span>(0-0)</div>
<div class="c" style="left:359px;top:551px;width:36px;">6-10</div>
<div class="c cj" style="left:396px;top:551px;width:127px;">门兴格拉德巴赫</div>
<div class="c" style="left:524px;top:551px;width:42px;">0.91</div>
<div class="c cj" style="left:567px;top:551px;width:93px;">一球</div>
<div class="c" style="left:661px;top:551px;width:43px;">0.98</div>
<div class="c" style="left:705px;top:551px;width:63px;">1.58</div>
<div class="c" style="left:769px;top:551px;width:64px;">4.58</div>
<div class="c" style="left:834px;top:551px;width:65px;">4.87</div>
<div class="c cj" style="left:900px;top:551px;width:36px;"><span style="color:#c80000">胜</span></div>
<div class="c cj" style="left:937px;top:551px;width:37px;"><span style="color:#0a6e0a">走</span></div>
<div class="c cj" style="left:975px;top:551px;width:56px;"><span style="color:#0a0aad">小</span></div>
<div class="c lg cj" style="left:5px;top:577px;width:80px;">德国杯</div>
<div class="c" style="left:86px;top:577px;width:74px;">25-08-27</div>
<div class="c cj" style="left:161px;top:577px;width:108px;">布伦瑞克</div>
<div class="c" style="left:270px;top:577px;width:88px;"><span style="color:#c80000">3-3</span>(1-1)</div>
<div class="c" style="left:359px;top:577px;width:36px;">4-2</div>
<div class="c cj" style="left:396px;top:577px;width:127px;"><span style="color:#0a6e0a">斯图加特</span></div>
<div class="c" style="left:524px;top:577px;width:42px;">0.88</div>
<div class="c cj" style="left:567px;top:577px;width:93px;">受球半/两</div>
<div class="c" style="left:661px;top:577px;width:43px;">0.94</div>
<div class="c" style="left:705px;top:577px;width:63px;">8.31</div>
<div class="c" style="left:769px;top:577px;width:64px;">5.76</div>
<div class="c" style="left:834px;top:577px;width:65px;">1.29</div>
<div class="c cj" style="left:900px;top:577px;width:36px;"><span style="color:#0a6e0a">平</span></div>
<div class="c cj" style="left:937px;top:577px;width:37px;"><span style="color:#0a0aad">输</span></div>
<div class="c cj" style="left:975px;top:577px;width:56px;"><span style="color:#c80000">大</span></div>
<div class="c lg cj" style="left:5px;top:603px;width:80px;">德甲</div>
<div class="c" style="left:86px;top:603px;width:74px;">25-08-23</div>
<div class="c cj" style="left:161px;top:603px;width:108px;">柏林联合</div>
<div class="c" style="left:270px;top:603px;width:88px;"><span style="color:#c80000">2-1</span>(2-0)</div>
<div class="c" style="left:359px;top:603px;width:36px;">5-11</div>
<div class="c cj" style="left:396px;top:603px;width:127px;"><span style="color:#0a6e0a">斯图加特</span></div>
<div class="c" style="left:524px;top:603px;width:42px;">1.05</div>
<div class="c cj" style="left:567px;top:603px;width:93px;">受半球</div>
<div class="c" style="left:661px;top:603px;width:43px;">0.84</div>
<div class="c" style="left:705px;top:603px;width:63px;">3.97</div>
<div class="c" style="left:769px;top:603px;width:64px;">3.78</div>
<div class="c" style="left:834px;top:603px;width:65px;">1.86</div>
<div class="c cj" style="left:900px;top:603px;width:36px;"><span style="color:#0a0aad">负</span></div>
<div class="c cj" style="left:937px;top:603px;width:37px;"><span style="color:#0a0aad">输</span></div>
<div class="c cj" style="left:975px;top:603px;width:56px;"><span style="color:#c80000">大</span></div>
<div class="c lg cj" style="left:5px;top:629px;width:80px;">德超杯</div>
<div class="c" style="left:86px;top:629px;width:74px;">25-08-17</div>
<div class="c cj" style="left:161px;top:629px;width:108px;"><span style="color:#0a6e0a">斯图加特</span></div>
<div class="c" style="left:270px;top:629px;width:88px;"><span style="color:#c80000">1-2</span>(0-1)</div>
<div class="c" style="left:359px;top:629px;width:36px;">1-3</div>
<div class="c cj" style="left:396px;top:629px;width:127px;">拜仁慕尼黑</div>
<div class="c" style="left:524px;top:629px;width:42px;">1.00</div>
<div class="c cj" style="left:567px;top:629px;width:93px;">受一球</div>
<div class="c" style="left:661px;top:629px;width:43px;">0.89</div>
<div class="c" style="left:705px;top:629px;width:63px;">5.09</div>
<div class="c" style="left:769px;top:629px;width:64px;">4.67</div>
<div class="c" style="left:834px;top:629px;width:65px;">1.54</div>
<div class="c cj" style="left:900px;top:629px;width:36px;"><span style="color:#0a0aad">负</span></div>
<div class="c cj" style="left:937px;top:629px;width:37px;"><span style="color:#0a6e0a">走</span></div>
<div class="c cj" style="left:975px;top:629px;width:56px;"><span style="color:#0a0aad">小</span></div>
<div class="c lg cj" style="left:5px;top:655px;width:80px;">球会友谊</div>
<div class="c" style="left:86px;top:655px;width:74px;">25-08-09</div>
<div class="c cj" style="left:161px;top:655px;width:108px;"><span style="color:#0a6e0a">斯图加特</span></div>
<div class="c" style="left:270px;top:655px;width:88px;"><span style="color:#c80000">0-1</span>(0-1)</div>
<div class="c" style="left:359px;top:655px;width:36px;">4-6</div>
<div class="c cj" style="left:396px;top:655px;width:127px;">博洛尼亚</div>
<div class="c" style="left:524px;top:655px;width:42px;">1.06</div>
<div class="c cj" style="left:567px;top:655px;width:93px;">半球</div>
<div class="c" style="left:661px;top:655px;width:43px;">0.76</div>
<div class="c" style="left:705px;top:655px;width:63px;">2.02</div>
<div class="c" style="left:769px;top:655px;width:64px;">3.58</div>
<div class="c" style="left:834px;top:655px;width:65px;">3.20</div>
<div class="c cj" style="left:900px;top:655px;width:36px;"><span style="color:#0a0aad">负</span></div>
<div class="c cj" style="left:937px;top:655px;width:37px;"><span style="color:#0a0aad">输</span></div>
<div class="c cj" style="left:975px;top:655px;width:56px;"><span style="color:#0a0aad">小</span></div>
<div class="c lg cj" style="left:5px;top:681px;width:80px;">球会友谊</div>
<div class="c" style="left:86px;top:681px;width:74px;">25-08-02</div>
<div class="c cj" style="left:161px;top:681px;width:108px;"><span style="color:#0a6e0a">斯图加特</span></div>
<div class="c" style="left:270px;top:681px;width:88px;"><span style="color:#c80000">6-0</span>(2-0)</div>
<div class="c" style="left:359px;top:681px;width:36px;">0-0</div>
<div class="c cj" style="left:396px;top:681px;width:127px;">图卢兹</div>
<div class="c" style="left:524px;top:681px;width:42px;"></div>
<div class="c" style="left:567px;top:681px;width:93px;"></div>
<div class="c" style="left:661px;top:681px;width:43px;"></div>
<div class="c" style="left:705px;top:681px;width:63px;">1.54</div>
<div class="c" style="left:769px;top:681px;width:64px;">4.43</div>
<div class="c" style="left:834px;top:681px;width:65px;">5.48</div>
<div class="c cj" style="left:900px;top:681px;width:36px;"><span style="color:#c80000">胜</span></div>
<div class="c" style="left:937px;top:681px;width:37px;"></div>
<div class="c" style="left:975px;top:681px;width:56px;"></div>
<div class="c sm" style="left:5px;top:707px;width:1026px">近<span class="r">10</span>场,胜5平1负4, 胜率:<span class="r">50%</span> 让胜率:<span class="r">33.3%</span> 大率:<span class="r">44.4%</span> 单率:<span class="r">50%</span></div>
<div class="ft" style="left:364px;top:382px">近</div>
<div class="sel sm10" style="left:380px;top:388px;width:38px;height:17px"><span class="st">10</span><svg class="chev" width="11" height="8" viewBox="0 0 11 8"><path d="M1.2 1.5 L5.5 5.8 L9.8 1.5" fill="none" stroke="#000" stroke-width="2.2"/></svg></div>
<div class="ft" style="left:422px;top:382px">场</div>
<div class="cb" style="left:438px;top:388px"></div>
<div class="ft" style="left:455px;top:382px">同客</div>
<div class="cb on" style="left:482px;top:388px"><svg width="13" height="13" viewBox="0 0 13 13"><path d="M2.6 6.6 L5.2 9.2 L10.4 3.6" fill="none" stroke="#fff" stroke-width="2.3"/></svg></div>
<div class="ft" style="left:495px;top:382px">欧罗巴杯</div>
<div class="cb on" style="left:543px;top:388px"><svg width="13" height="13" viewBox="0 0 13 13"><path d="M2.6 6.6 L5.2 9.2 L10.4 3.6" fill="none" stroke="#fff" stroke-width="2.3"/></svg></div>
<div class="ft" style="left:556px;top:382px">德甲</div>
<div class="cb on" style="left:580px;top:388px"><svg width="13" height="13" viewBox="0 0 13 13"><path d="M2.6 6.6 L5.2 9.2 L10.4 3.6" fill="none" stroke="#fff" stroke-width="2.3"/></svg></div>
<div class="ft" style="left:593px;top:382px">球会友谊</div>
<div class="cb on" style="left:641px;top:388px"><svg width="13" height="13" viewBox="0 0 13 13"><path d="M2.6 6.6 L5.2 9.2 L10.4 3.6" fill="none" stroke="#fff" stroke-width="2.3"/></svg></div>
<div class="ft" style="left:654px;top:382px">德国杯</div>
<div class="cb on" style="left:690px;top:388px"><svg width="13" height="13" viewBox="0 0 13 13"><path d="M2.6 6.6 L5.2 9.2 L10.4 3.6" fill="none" stroke="#fff" stroke-width="2.3"/></svg></div>
<div class="ft" style="left:703px;top:382px">德超杯</div>
</body></html>
